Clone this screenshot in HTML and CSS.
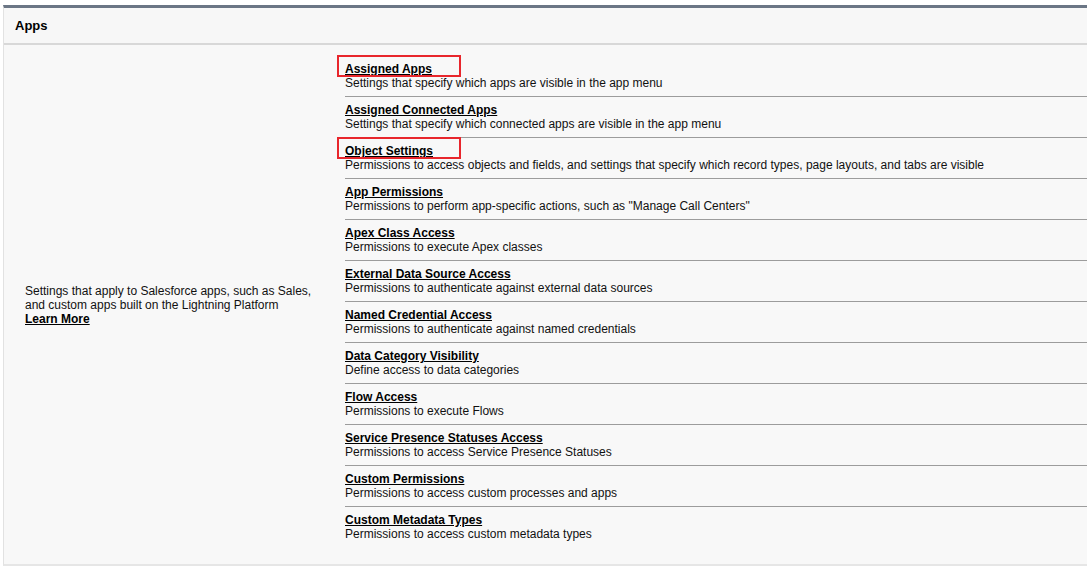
FILE: index.html
```html
<!DOCTYPE html>
<html lang="en">
<head>
<meta charset="utf-8">
<title>Apps</title>
<link rel="stylesheet" href="styles.css">
</head>
<body>
<div class="panel">
  <div class="panel-header">Apps</div>
  <div class="panel-body">
    <div class="intro">
      <div>Settings that apply to Salesforce apps, such as Sales, and custom apps built on the Lightning Platform</div>
      <a class="link" href="#">Learn More</a>
    </div>
    <div class="items">
      <div class="item marked"><a class="link" href="#">Assigned Apps</a><div class="desc">Settings that specify which apps are visible in the app menu</div></div>
      <div class="item"><a class="link" href="#">Assigned Connected Apps</a><div class="desc">Settings that specify which connected apps are visible in the app menu</div></div>
      <div class="item marked"><a class="link" href="#">Object Settings</a><div class="desc">Permissions to access objects and fields, and settings that specify which record types, page layouts, and tabs are visible</div></div>
      <div class="item"><a class="link" href="#">App Permissions</a><div class="desc">Permissions to perform app-specific actions, such as "Manage Call Centers"</div></div>
      <div class="item"><a class="link" href="#">Apex Class Access</a><div class="desc">Permissions to execute Apex classes</div></div>
      <div class="item"><a class="link" href="#">External Data Source Access</a><div class="desc">Permissions to authenticate against external data sources</div></div>
      <div class="item"><a class="link" href="#">Named Credential Access</a><div class="desc">Permissions to authenticate against named credentials</div></div>
      <div class="item"><a class="link" href="#">Data Category Visibility</a><div class="desc">Define access to data categories</div></div>
      <div class="item"><a class="link" href="#">Flow Access</a><div class="desc">Permissions to execute Flows</div></div>
      <div class="item"><a class="link" href="#">Service Presence Statuses Access</a><div class="desc">Permissions to access Service Presence Statuses</div></div>
      <div class="item"><a class="link" href="#">Custom Permissions</a><div class="desc">Permissions to access custom processes and apps</div></div>
      <div class="item"><a class="link" href="#">Custom Metadata Types</a><div class="desc">Permissions to access custom metadata types</div></div>
    </div>
  </div>
</div>
</body>
</html>
```
FILE: styles.css
```css
html, body {
  margin: 0;
  padding: 0;
  background: #ffffff;
  overflow: hidden;
}
body {
  font-family: "Liberation Sans", Arial, sans-serif;
  font-size: 12px;
  line-height: 14px;
  color: #000;
}
.panel {
  margin: 5px 0 0 3px;
  width: 1100px;
  background: #f8f8f8;
  border-top: 3px solid #6b7685;
  border-left: 1px solid #e2e2e2;
  border-bottom: 2px solid #e6e6e6;
}
.panel-header {
  height: 35px;
  padding: 0 11px;
  display: flex;
  align-items: center;
  font-weight: bold;
  font-size: 13px;
  border-bottom: 2px solid #d8d8d8;
  background: #f7f7f7;
}
.panel-body {
  display: grid;
  grid-template-columns: 341px 1fr;
  padding: 11px 0 17px 0;
}
.intro {
  align-self: center;
  padding: 6px 20px 0 21px;
  color: #111;
}
.link {
  color: #000;
  font-weight: bold;
  text-decoration: underline;
}
.items {
  display: flex;
  flex-direction: column;
}
.item {
  position: relative;
  padding: 6px 0;
  border-bottom: 1px solid #9c9c9c;
}
.item:last-child {
  border-bottom: none;
}
.desc {
  color: #111;
}
.item.marked::before {
  content: "";
  position: absolute;
  left: -8px;
  top: -1px;
  width: 124px;
  height: 22px;
  box-sizing: border-box;
  border: 2px solid #e8262c;
  pointer-events: none;
}
```
